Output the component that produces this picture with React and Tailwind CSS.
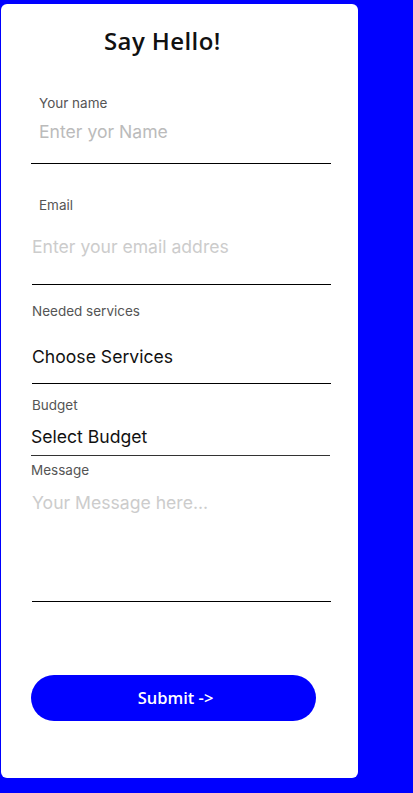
import React from "react";

export default function App() {
  const body = { fontFamily: "Inter, 'Noto Sans', sans-serif" };
  const head = { fontFamily: "'Open Sans', Lato, sans-serif" };
  return (
    <div className="w-[413px] h-[793px] bg-[#0000ff] overflow-hidden pt-1 pl-px" style={body}>
      <div className="w-[357px] h-[774px] bg-white rounded-md flex flex-col items-start">
        <div className="mt-[23px] h-[28px] ml-[103px] text-[24px] tracking-[0.4px] font-semibold leading-[28px] text-[#111]" style={head}>
          Say Hello!
        </div>

        <div className="mt-[40px] ml-[38px] h-4 leading-4 text-[13.5px] text-[#555]">Your name</div>
        <div className="mt-[9px] ml-[38px] h-6 leading-6 text-[17.6px] text-[#bbb]">Enter yor Name</div>
        <div className="mt-[19px] ml-[30px] w-[300px] h-px bg-black"></div>

        <div className="mt-[33px] ml-[38px] h-4 leading-4 text-[13.5px] text-[#555]">Email</div>
        <div className="mt-[22px] ml-[31px] h-6 leading-6 text-[17.6px] text-[#ccc]">Enter your email addres</div>
        <div className="mt-[25px] ml-[31px] w-[299px] h-px bg-black"></div>

        <div className="mt-[18px] ml-[31px] h-4 leading-4 text-[13.5px] text-[#555]">Needed services</div>
        <div className="mt-[26px] ml-[31px] h-6 leading-6 text-[17.6px] text-[#111]">Choose Services</div>
        <div className="mt-[14px] ml-[31px] w-[299px] h-px bg-black"></div>

        <div className="mt-[13px] ml-[31px] h-4 leading-4 text-[13.5px] text-[#555]">Budget</div>
        <div className="mt-[12px] ml-[30px] h-6 leading-6 text-[17.6px] text-[#111]">Select Budget</div>
        <div className="mt-[6px] ml-[30px] w-[299px] h-px bg-[#333]"></div>

        <div className="mt-[6px] ml-[30px] h-4 leading-4 text-[13.5px] text-[#555]">Message</div>
        <div className="mt-[13px] ml-[31px] h-6 leading-6 text-[17.6px] text-[#ccc]">Your Message here...</div>
        <div className="mt-[86px] ml-[31px] w-[299px] h-px bg-black"></div>

        <button
          className="mt-[73px] ml-[30px] w-[285px] h-[46px] rounded-full bg-[#0000ff] text-white text-[16.5px] font-semibold flex items-center justify-center pl-[4px]"
          style={head}
        >
          Submit -&gt;
        </button>
      </div>
    </div>
  );
}
